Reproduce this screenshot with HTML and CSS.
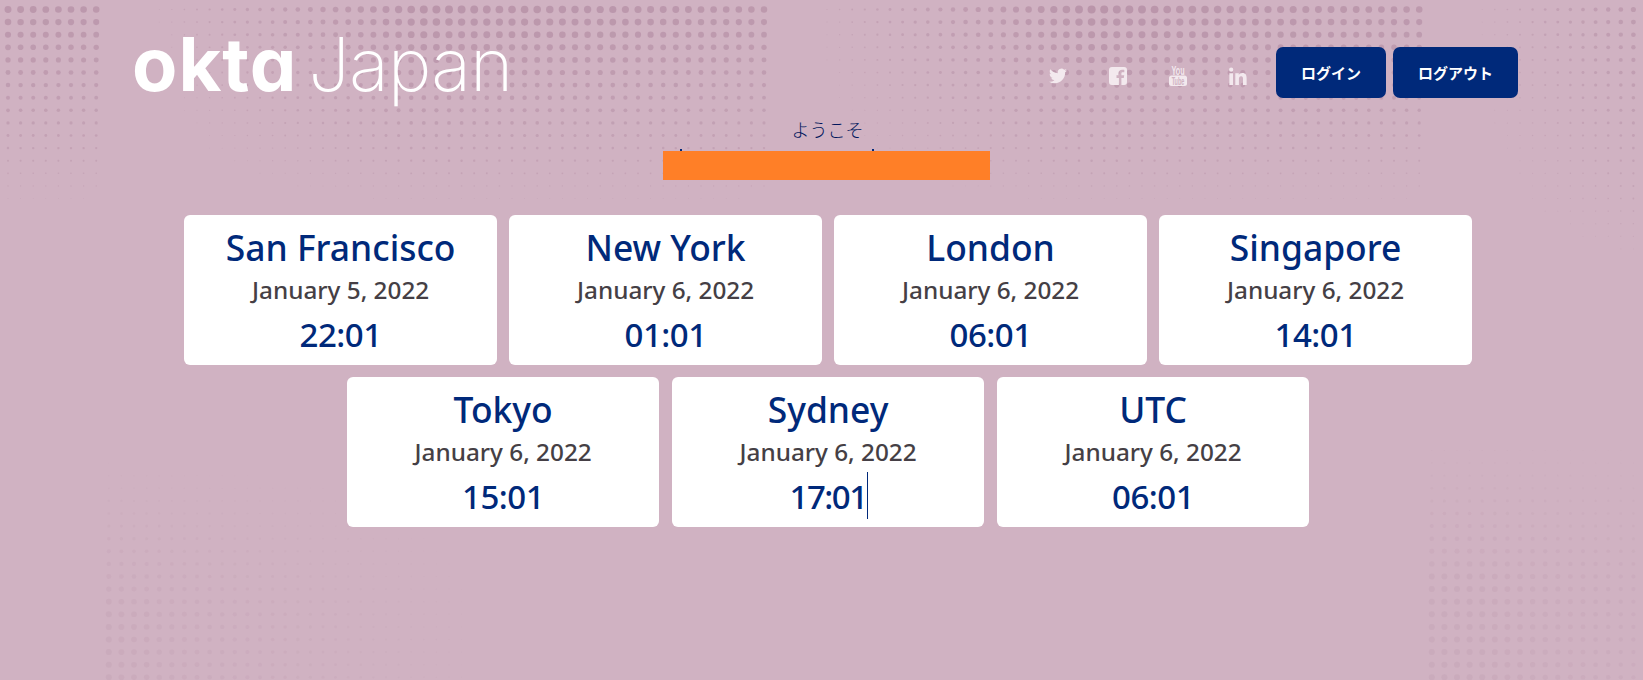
FILE: index.html
```html
<!DOCTYPE html>
<html lang="ja">
<head>
    <meta charset="UTF-8">
    <meta name="viewport" content="width=device-width, initial-scale=1.0">
    <title>Okta Japan</title>
    <link rel="stylesheet" href="styles.css">
    <script src="background.js" defer></script>
</head>
<body>
    <svg id="halftone" class="halftone" width="1643" height="680" aria-hidden="true"></svg>
    <header class="site-header">
        <a class="logo" href="#"><span class="logo-okta">okta</span><span class="logo-region">Japan</span></a>
        <nav class="social">
            <a href="#" aria-label="Twitter"><svg class="icon" width="18" height="18" viewBox="0 0 24 24"><path d="M23.953 4.57a10 10 0 01-2.825.775 4.958 4.958 0 002.163-2.723c-.951.555-2.005.959-3.127 1.184a4.92 4.92 0 00-8.384 4.482C7.69 8.095 4.067 6.13 1.64 3.162a4.822 4.822 0 00-.666 2.475c0 1.71.87 3.213 2.188 4.096a4.904 4.904 0 01-2.228-.616v.06a4.923 4.923 0 003.946 4.827 4.996 4.996 0 01-2.212.085 4.936 4.936 0 004.604 3.417 9.867 9.867 0 01-6.102 2.105c-.39 0-.779-.023-1.17-.067a13.995 13.995 0 007.557 2.209c9.053 0 13.998-7.496 13.998-13.985 0-.21 0-.42-.015-.63A9.935 9.935 0 0024 4.59z"/></svg></a>
            <a href="#" aria-label="Facebook"><svg class="icon" width="18" height="18" viewBox="0 0 18 18"><path d="M3 0h12a3 3 0 013 3v12a3 3 0 01-3 3h-2.600v-7h2.400l.4-2.700h-2.800V6.600c0-.8.3-1.300 1.400-1.300h1.500V2.900c-.3 0-1.200-.1-2.200-.1-2.200 0-3.600 1.300-3.600 3.700v1.800H7.500V11h2.400v7H3a3 3 0 01-3-3V3a3 3 0 013-3z"/></svg></a>
            <a href="#" aria-label="YouTube"><svg class="icon icon-youtube" width="18" height="20" viewBox="0 0 18 20"><text class="yt-you" transform="translate(9 8.500) scale(.6 1)" text-anchor="middle">You</text><rect y="9.500" width="18" height="10.500" rx="2.500"/><text class="yt-tube" transform="translate(9 18.500) scale(.5 1)" text-anchor="middle">Tube</text></svg></a>
            <a href="#" aria-label="LinkedIn"><svg class="icon" width="18" height="18" viewBox="3.200 2.800 17.600 17.600"><path d="M20.447 20.452h-3.554v-5.569c0-1.328-.027-3.037-1.852-3.037-1.853 0-2.136 1.445-2.136 2.939v5.667H9.351V9h3.414v1.561h.046c.477-.9 1.637-1.85 3.37-1.85 3.601 0 4.267 2.37 4.267 5.455v6.286zM5.337 7.433a2.062 2.062 0 01-2.063-2.065 2.064 2.064 0 112.063 2.065zm1.782 13.019H3.555V9h3.564v11.452z"/></svg></a>
        </nav>
        <div class="auth-buttons">
            <button class="btn btn-login">ログイン</button>
            <button class="btn btn-logout">ログアウト</button>
        </div>
    </header>

    <section class="welcome">
        <p class="welcome-label">ようこそ</p>
        <div class="welcome-name"></div>
    </section>

    <main class="clocks">
        <div class="clock">
            <h2 class="clock-city">San Francisco</h2>
            <p class="clock-date">January 5, 2022</p>
            <p class="clock-time">22:01</p>
        </div>
        <div class="clock">
            <h2 class="clock-city">New York</h2>
            <p class="clock-date">January 6, 2022</p>
            <p class="clock-time">01:01</p>
        </div>
        <div class="clock">
            <h2 class="clock-city">London</h2>
            <p class="clock-date">January 6, 2022</p>
            <p class="clock-time">06:01</p>
        </div>
        <div class="clock">
            <h2 class="clock-city">Singapore</h2>
            <p class="clock-date">January 6, 2022</p>
            <p class="clock-time">14:01</p>
        </div>
        <div class="clock clock-row-start">
            <h2 class="clock-city">Tokyo</h2>
            <p class="clock-date">January 6, 2022</p>
            <p class="clock-time">15:01</p>
        </div>
        <div class="clock">
            <h2 class="clock-city">Sydney</h2>
            <p class="clock-date">January 6, 2022</p>
            <p class="clock-time"><span class="caret">17:01</span></p>
        </div>
        <div class="clock">
            <h2 class="clock-city">UTC</h2>
            <p class="clock-date">January 6, 2022</p>
            <p class="clock-time">06:01</p>
        </div>
    </main>
</body>
</html>
```

FILE: styles.css
```css
html, body {
    height: 100%;
}
body {
    font-family: "Noto Sans", "Noto Sans CJK JP", sans-serif;
    background-color: #d0b2c2;
    color: #00297a;
    margin: 0;
    padding: 0;
    overflow: hidden;
}
.halftone {
    position: absolute;
    top: 0;
    left: 0;
    z-index: -1;
}
.site-header {
    display: flex;
    align-items: center;
    height: 51px;
    padding: 47px 125px 0 132px;
}
.logo {
    display: flex;
    align-items: baseline;
    color: #fff;
    text-decoration: none;
    margin-right: auto;
    margin-bottom: 16px;
    line-height: 51px;
    font-size: 74px;
}
.logo-okta {
    font-family: Inter, sans-serif;
    font-weight: 700;
    font-feature-settings: "cv11" 1;
    letter-spacing: 1px;
}
.logo-region {
    font-family: Inter, sans-serif;
    font-weight: 200;
    font-size: 74px;
    letter-spacing: -1px;
    margin-left: 11px;
}
.social {
    display: flex;
    align-items: center;
    gap: 42px;
    margin: 6px 29px 0 0;
}
.social a {
    display: flex;
}
.icon {
    fill: #f3e9ee;
}
.icon-youtube {
    overflow: visible;
}
.yt-you, .yt-tube {
    font-family: "Liberation Sans", sans-serif;
    font-weight: 700;
}
.yt-you {
    font-size: 12px;
    fill: #f3e9ee;
}
.yt-tube {
    font-size: 11px;
    fill: #d0b2c2;
}
.auth-buttons {
    display: flex;
    gap: 7px;
}
.btn {
    height: 51px;
    background-color: #00297a;
    color: white;
    border: none;
    border-radius: 7px;
    font-family: "Noto Sans CJK JP", sans-serif;
    font-weight: 700;
    font-size: 15px;
    cursor: pointer;
}
.btn-login {
    width: 110px;
}
.btn-logout {
    width: 125px;
}
.welcome {
    display: flex;
    flex-direction: column;
    align-items: center;
    padding: 19px 0 0 12px;
}
.welcome-label {
    margin: 0;
    font-family: "Noto Sans CJK JP", sans-serif;
    font-size: 18px;
    font-weight: 300;
    line-height: 25px;
    color: #00165c;
}
.welcome-name {
    position: relative;
    width: 327px;
    height: 29px;
    margin: 9px 0 0 -3px;
    background-color: #ff7f27;
}
/* the tops of the hidden name stick out above the orange bar */
.welcome-name::before, .welcome-name::after {
    content: "";
    position: absolute;
    top: -2px;
    width: 2px;
    height: 2px;
    background-color: #00297a;
}
.welcome-name::before {
    left: 17px;
}
.welcome-name::after {
    left: 209px;
}
.clocks {
    display: flex;
    flex-wrap: wrap;
    gap: 12px 12.400px;
    width: 1288px;
    margin: 35px 0 0 184.300px;
}
.clock {
    width: 312.600px;
    height: 150px;
    background-color: #fff;
    border-radius: 6px;
    text-align: center;
}
.clock-row-start {
    margin-left: 162.500px;
}
.clock-city {
    margin: 8px 0 0;
    font-size: 35.400px;
    font-weight: 500;
    line-height: 48px;
}
.clock-date {
    margin: 4px 0 0;
    font-size: 24.300px;
    font-weight: 500;
    line-height: 30px;
    color: #453f45;
}
.clock-time {
    margin: 7px 0 0;
    font-size: 33px;
    font-weight: 500;
    letter-spacing: -0.500px;
    line-height: 46px;
}
.caret {
    position: relative;
    letter-spacing: -1.500px;
}
.caret::after {
    content: "";
    position: absolute;
    top: -2px;
    right: -1px;
    width: 1px;
    height: 47px;
    background-color: #00297a;
}
```

FILE: background.js
```js
// halftone dots behind the page, the radius of each dot comes from its place on the page
const PITCH = 12.6;
const TILE = 660;
const TILE_START = 106;

function clamp(v) {
    return Math.max(0, Math.min(1, v));
}

function topBand(x, y) {
    const u = ((x - TILE_START) % TILE + TILE) % TILE;
    const across = clamp((u - 20) / 300) * (1 - 0.2 * clamp((u - 320) / 340));
    const depth = x > 1425 ? 300 : 225;
    return 4.2 * across * clamp(1 - y / depth);
}

function bottomBand(x, y) {
    if (x > TILE_START && x < 520) {
        return 3 * clamp((y - 440) / 170) * clamp(1 - (x - TILE_START) / 420);
    }
    if (x > 1425) {
        return 3 * clamp((y - 420) / 160) * clamp(1.1 - (x - 1425) / 500);
    }
    return 0;
}

function drawHalftone() {
    const svg = document.getElementById('halftone');
    let dots = '';
    for (let row = 0; row < 54; row++) {
        for (let col = 0; col < 131; col++) {
            const x = 8 + col * PITCH;
            const y = 9.5 + row * PITCH;
            const top = topBand(x, y);
            const bottom = bottomBand(x, y);
            if (top > 0.4) {
                dots += `<circle cx="${x.toFixed(1)}" cy="${y.toFixed(1)}" r="${top.toFixed(2)}" fill="#b58fa5" opacity="${(0.3 + top * 0.13).toFixed(2)}"/>`;
            } else if (bottom > 0.4) {
                dots += `<circle cx="${x.toFixed(1)}" cy="${y.toFixed(1)}" r="${bottom.toFixed(2)}" fill="#b58fa5" opacity="${(0.05 + bottom * 0.05).toFixed(2)}"/>`;
            }
        }
    }
    svg.innerHTML = dots;
}

drawHalftone();
```
